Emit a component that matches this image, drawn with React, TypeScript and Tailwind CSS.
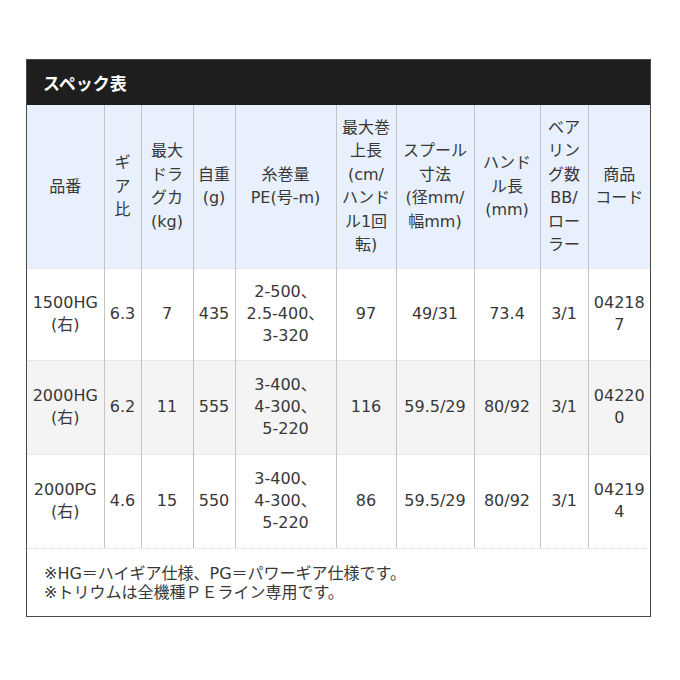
import React from "react";

const widths = [77, 37, 52, 42, 101, 60, 78, 66, 48, 62];

const headers: string[][] = [
  ["品番"],
  ["ギ", "ア", "比"],
  ["最大", "ドラ", "グカ", "(kg)"],
  ["自重", "(g)"],
  ["糸巻量", "PE(号-m)"],
  ["最大巻", "上長", "(cm/", "ハンド", "ル1回", "転)"],
  ["スプール", "寸法", "(径mm/", "幅mm)"],
  ["ハンド", "ル長", "(mm)"],
  ["ベア", "リン", "グ数", "BB/", "ロー", "ラー"],
  ["商品", "コード"],
];

const rows: string[][][] = [
  [["1500HG", "(右)"], ["6.3"], ["7"], ["435"], ["2-500、", "2.5-400、", "3-320"], ["97"], ["49/31"], ["73.4"], ["3/1"], ["04218", "7"]],
  [["2000HG", "(右)"], ["6.2"], ["11"], ["555"], ["3-400、", "4-300、", "5-220"], ["116"], ["59.5/29"], ["80/92"], ["3/1"], ["04220", "0"]],
  [["2000PG", "(右)"], ["4.6"], ["15"], ["550"], ["3-400、", "4-300、", "5-220"], ["86"], ["59.5/29"], ["80/92"], ["3/1"], ["04219", "4"]],
];

const rowBg = ["bg-white", "bg-[#f4f4f4]", "bg-white"];
const rowH = ["h-[92px]", "h-[94px]", "h-[94px]"];

function Lines({ lines }: { lines: string[] }) {
  return (
    <>
      {lines.map((l, i) => (
        <div key={i} className="whitespace-nowrap">
          {l}
        </div>
      ))}
    </>
  );
}

export default function App() {
  return (
    <div className="w-[680px] h-[680px] bg-white pt-[59px] pl-[26px] font-['DejaVu_Sans','Noto_Sans_CJK_JP',sans-serif] text-[#383838]">
      <div className="w-[625px] border border-[#4a4a4a]">
        <div className="h-[45px] bg-[#1e1e1e] flex items-center pl-[16px] text-white font-bold text-[17px] font-['Noto_Sans_CJK_JP',sans-serif]">
          スペック表
        </div>
        <table className="table-fixed w-[623px] border-collapse">
          <colgroup>
            {widths.map((w, i) => (
              <col key={i} style={{ width: w }} />
            ))}
          </colgroup>
          <tbody>
            <tr className="h-[163px] bg-[#e7f0fc]">
              {headers.map((h, i) => (
                <td
                  key={i}
                  className={`p-0 text-center align-middle text-[16px] leading-[23.5px] ${i > 0 ? "border-l border-[#c4c4c4]" : ""}`}
                >
                  <Lines lines={h} />
                </td>
              ))}
            </tr>
            {rows.map((r, ri) => (
              <tr key={ri} className={`${rowBg[ri]} ${rowH[ri]} border-t border-dotted border-[#dcdcdc]`}>
                {r.map((c, ci) => (
                  <td
                    key={ci}
                    className={`p-0 text-center align-middle text-[16px] leading-[22px] ${ci > 0 ? "border-l border-solid border-[#c4c4c4]" : ""}`}
                  >
                    <Lines lines={c} />
                  </td>
                ))}
              </tr>
            ))}
          </tbody>
        </table>
        <div className="h-[68px] border-t border-dotted border-[#dcdcdc] pl-[17px] pt-[15px] text-[16px] leading-[19px]">
          <div>※HG＝ハイギア仕様、PG＝パワーギア仕様です。</div>
          <div>※トリウムは全機種ＰＥライン専用です。</div>
        </div>
      </div>
    </div>
  );
}
